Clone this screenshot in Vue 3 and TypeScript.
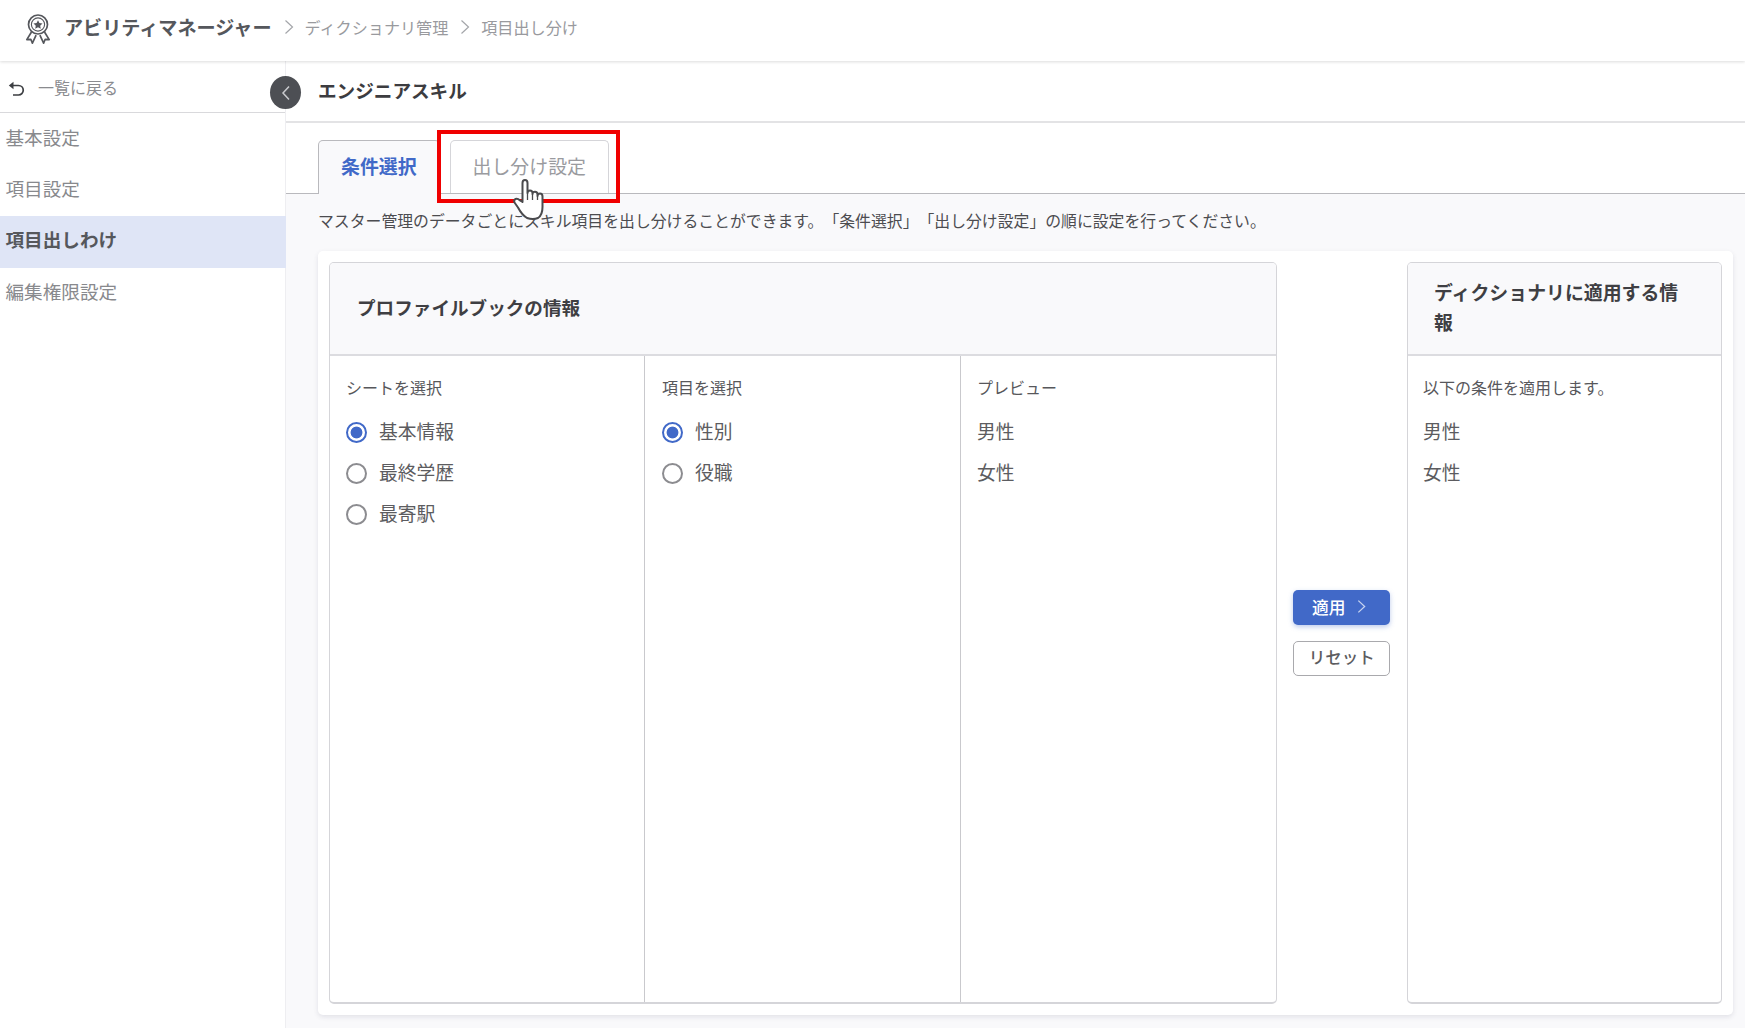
<template>
  <div class="page">
    <header class="top-bar">
      <svg class="badge-icon" viewBox="0 0 28 32" width="28" height="32" fill="none" stroke="#55575c" stroke-width="1.7">
        <circle cx="14" cy="11.5" r="9.5" />
        <circle cx="14" cy="11.5" r="6.6" stroke-width="1.1" />
        <path d="M14 7.2l1.4 2.9 3.1.4-2.3 2.2.6 3.1-2.8-1.5-2.8 1.5.6-3.1-2.3-2.2 3.1-.4z" fill="#55575c" stroke="none" />
        <path d="M7.5 19l-4.7 7.6 4-.3 1.6 3.9 3.7-8M20.500 19l4.700 7.600-4-.3-1.600 3.900-3.700-8" stroke-linejoin="round" />
      </svg>
      <span class="app-name">アビリティマネージャー</span>
      <template v-for="crumb in crumbs" :key="crumb">
        <svg class="crumb-arrow" viewBox="0 0 10 16" width="10" height="16" fill="none" stroke="#a4a6aa" stroke-width="1.2">
          <path d="M1.500 1.500L8.500 8l-7 6.500" />
        </svg>
        <span class="crumb">{{ crumb }}</span>
      </template>
    </header>

    <div class="body-row">
      <aside class="side">
        <div class="back-row">
          <svg class="back-icon" viewBox="0 0 20 20" width="20" height="20" fill="none" stroke="#3c3e42" stroke-width="1.7">
            <path d="M7 5.500h5.500a4.700 4.700 0 0 1 0 9.500H7" />
            <path d="M7.500 1.800L2.800 5.500l4.700 3.700z" fill="#3c3e42" stroke="none" />
          </svg>
          <span>一覧に戻る</span>
        </div>
        <nav class="menu">
          <div
            v-for="item in menu"
            :key="item"
            :class="['menu-item', { active: item === activeMenu }]"
          >
            {{ item }}
          </div>
        </nav>
        <div class="collapse-btn">
          <svg viewBox="0 0 10 16" width="10" height="16" fill="none" stroke="#c9cace" stroke-width="1.500">
            <path d="M8 1.500L2 8l6 6.500" />
          </svg>
        </div>
      </aside>

      <main class="main">
        <div class="title-bar">エンジニアスキル</div>

        <div class="tab-bar">
          <div class="tab current">条件選択</div>
          <div class="tab">出し分け設定</div>
          <div class="red-box"></div>
          <svg class="hand" viewBox="0 0 32 41" width="32" height="41" fill="#fff" stroke="#4a4a4d" stroke-width="2" stroke-linejoin="round">
            <path d="M9.500 23V4Q9.500 1 12 1T14.500 4V14Q14.500 11.500 17 11.500T19.500 14V15Q19.500 12.800 22 12.800T24.500 15.500V17Q24.500 14.500 27 14.500T29.500 17.500V28Q29.500 36 25 39Q20 41 14 39Q9 36 5 28.500L1.500 23.500Q.5 21 2.500 20T7 21.500Z" />
            <path d="M14.500 14V21M19.500 15V21M24.500 17V21" fill="none" stroke-width="1.300" />
          </svg>
        </div>

        <p class="lead">マスター管理のデータごとにスキル項目を出し分けることができます。「条件選択」「出し分け設定」の順に設定を行ってください。</p>

        <section class="card">
          <div class="panel source">
            <h2 class="panel-head">プロファイルブックの情報</h2>
            <div class="columns">
              <div class="col">
                <div class="col-label">シートを選択</div>
                <label v-for="sheet in sheets" :key="sheet" class="row">
                  <span :class="['radio', { on: sheet === sheets[0] }]"></span>
                  {{ sheet }}
                </label>
              </div>
              <div class="col">
                <div class="col-label">項目を選択</div>
                <label v-for="field in fields" :key="field" class="row">
                  <span :class="['radio', { on: field === fields[0] }]"></span>
                  {{ field }}
                </label>
              </div>
              <div class="col">
                <div class="col-label">プレビュー</div>
                <div v-for="value in values" :key="value" class="row">{{ value }}</div>
              </div>
            </div>
          </div>

          <div class="actions">
            <button class="btn primary">
              適用
              <svg viewBox="0 0 10 16" width="9" height="15" fill="none" stroke="#c8d4f0" stroke-width="1.400">
                <path d="M1.500 1.500L8.500 8l-7 6.500" />
              </svg>
            </button>
            <button class="btn outline">リセット</button>
          </div>

          <div class="panel target">
            <h2 class="panel-head wrap">ディクショナリに適用する情報</h2>
            <div class="col">
              <div class="col-label">以下の条件を適用します。</div>
              <div v-for="value in values" :key="value" class="row">{{ value }}</div>
            </div>
          </div>
        </section>
      </main>
    </div>
  </div>
</template>

<script setup lang="ts">
const crumbs: string[] = ['ディクショナリ管理', '項目出し分け']
const menu: string[] = ['基本設定', '項目設定', '項目出しわけ', '編集権限設定']
const activeMenu = '項目出しわけ'

const sheets: string[] = ['基本情報', '最終学歴', '最寄駅']
const fields: string[] = ['性別', '役職']
const values: string[] = ['男性', '女性']
</script>

<style>
html,
body {
  margin: 0;
  background: #fff;
}
</style>

<style scoped>
.page {
  height: 1028px;
  overflow: hidden;
  display: flex;
  flex-direction: column;
  font-family: "Liberation Sans", "Noto Sans CJK JP", sans-serif;
  color: #4c4c50;
  text-spacing-trim: space-all;
}

.top-bar {
  height: 61px;
  flex: none;
  display: flex;
  align-items: center;
  padding-left: 24px;
  box-sizing: border-box;
  background: #fff;
  box-shadow: 0 1px 3px rgba(0, 0, 0, 0.14);
  position: relative;
  z-index: 2;
}

.badge-icon {
  margin: 0 12px 4px 0;
}

.app-name {
  margin-bottom: 8px;
  font-size: 19.100px;
  font-weight: 700;
  color: #55575c;
}

.crumb-arrow {
  margin: 0 11px 8px 12px;
}

.crumb {
  margin-bottom: 8px;
  font-size: 16.100px;
  color: #999a9e;
}

.body-row {
  flex: 1;
  display: flex;
  min-height: 0;
}

.side {
  width: 286px;
  flex: none;
  position: relative;
  background: #fff;
  border-right: 1px solid #eeeef1;
  box-sizing: border-box;
}

.back-row {
  height: 51px;
  display: flex;
  align-items: center;
  gap: 12px;
  padding-left: 7px;
  border-bottom: 1px solid #d9d9dc;
  font-size: 16px;
  color: #8a8b8f;
}

.back-icon {
  margin: 6px 0 0 -1px;
}

.menu {
  padding-top: 1px;
}

.menu-item {
  height: 51.200px;
  line-height: 49.200px;
  padding-left: 5.500px;
  font-size: 18.600px;
  color: #88898d;
}

.menu-item.active {
  margin-right: -1px;
  background: #dfe5f6;
  font-weight: 700;
  color: #55575c;
}

.collapse-btn {
  position: absolute;
  top: 15px;
  right: -16px;
  width: 31px;
  height: 33px;
  border-radius: 50%;
  background: #4d4f54;
  display: flex;
  align-items: center;
  justify-content: center;
  z-index: 3;
}

.main {
  flex: 1;
  min-width: 0;
  background: #f9f9fb;
}

.title-bar {
  height: 62px;
  box-sizing: border-box;
  padding-left: 32px;
  line-height: 62px;
  background: #fff;
  border-bottom: 2px solid #e3e3e5;
  font-size: 18.600px;
  font-weight: 700;
  color: #3c3c40;
}

.tab-bar {
  height: 71px;
  box-sizing: border-box;
  padding: 17px 0 0 32px;
  display: flex;
  gap: 10px;
  background: #fff;
  border-bottom: 1px solid #b9b9bd;
  position: relative;
}

.tab {
  height: 53px;
  box-sizing: border-box;
  padding: 0 22px;
  line-height: 54px;
  font-size: 18.900px;
  color: #9a9b9f;
  background: #fff;
  border: 1px solid #d5d5d9;
  border-bottom: none;
  border-radius: 5px 5px 0 0;
}

.tab.current {
  height: 54px;
  margin-bottom: -1px;
  background: #f9f9fb;
  border-color: #b9b9bd;
  font-weight: 700;
  color: #4169c8;
}

.red-box {
  position: absolute;
  left: 151px;
  top: 7px;
  width: 183px;
  height: 73px;
  box-sizing: border-box;
  border: 4px solid #f00000;
}

.hand {
  position: absolute;
  left: 227px;
  top: 56px;
  z-index: 2;
}

.lead {
  margin: 0;
  height: 57px;
  box-sizing: border-box;
  padding-left: 32px;
  line-height: 56px;
  font-size: 15.850px;
  color: #4c4c50;
  white-space: nowrap;
}

.card {
  height: 764px;
  margin: 0 12px 0 32px;
  box-sizing: border-box;
  padding: 11px;
  display: flex;
  background: #fff;
  border-radius: 5px;
  box-shadow: 0 2px 5px rgba(60, 60, 90, 0.12);
}

.panel {
  display: flex;
  flex-direction: column;
  box-sizing: border-box;
  border: 1px solid #d5d5d9;
  border-bottom-width: 2px;
  border-radius: 5px;
  overflow: hidden;
}

.source {
  flex: 1;
  min-width: 0;
}

.target {
  width: 315px;
  flex: none;
}

.target .col {
  padding-left: 15px;
}

.panel-head {
  height: 93px;
  flex: none;
  margin: 0;
  box-sizing: border-box;
  padding: 0 27px;
  display: flex;
  align-items: center;
  background: #f9f9fb;
  border-bottom: 2px solid #dcdce0;
  font-size: 18.600px;
  font-weight: 700;
  line-height: 30px;
  color: #3f3f43;
}

.panel-head.wrap {
  padding: 0 30px 0 26px;
  font-size: 18.900px;
}

.columns {
  flex: 1;
  display: grid;
  grid-template-columns: 314px 316px 1fr;
}

.col {
  padding: 18px 16px;
}

.columns .col + .col {
  border-left: 1px solid #c9c9cd;
}

.columns .col:nth-child(2) {
  padding-left: 17px;
}

.col-label {
  height: 30px;
  line-height: 30px;
  margin-bottom: 8px;
  font-size: 16px;
  color: #57575b;
}

.row {
  height: 41px;
  display: flex;
  align-items: center;
  gap: 12px;
  box-sizing: border-box;
  padding-bottom: 4px;
  font-size: 18.800px;
  color: #5c5c60;
}

.radio {
  width: 21px;
  height: 21px;
  flex: none;
  margin-top: 4px;
  box-sizing: border-box;
  border: 2.500px solid #8c8c90;
  border-radius: 50%;
}

.radio.on {
  border-color: #4169c8;
  background: radial-gradient(circle, #4169c8 0 5.500px, #fff 6.300px);
}

.actions {
  width: 130.500px;
  flex: none;
  display: flex;
  flex-direction: column;
  align-items: center;
  justify-content: center;
  gap: 16px;
}

.btn {
  width: 97px;
  height: 35px;
  box-sizing: border-box;
  border-radius: 5px;
  font-family: inherit;
  font-weight: 500;
  display: flex;
  align-items: center;
  justify-content: center;
  padding: 0 0 2px;
}

.btn.primary {
  gap: 12px;
  padding-right: 5px;
  border: none;
  background: #4169c8;
  color: #fff;
  font-size: 16.700px;
  box-shadow: 0 2px 5px rgba(65, 105, 200, 0.35);
}

.btn.outline {
  padding-bottom: 3px;
  background: #fff;
  border: 1px solid #a9a9ad;
  color: #5c5c60;
  font-size: 16.500px;
}
</style>
